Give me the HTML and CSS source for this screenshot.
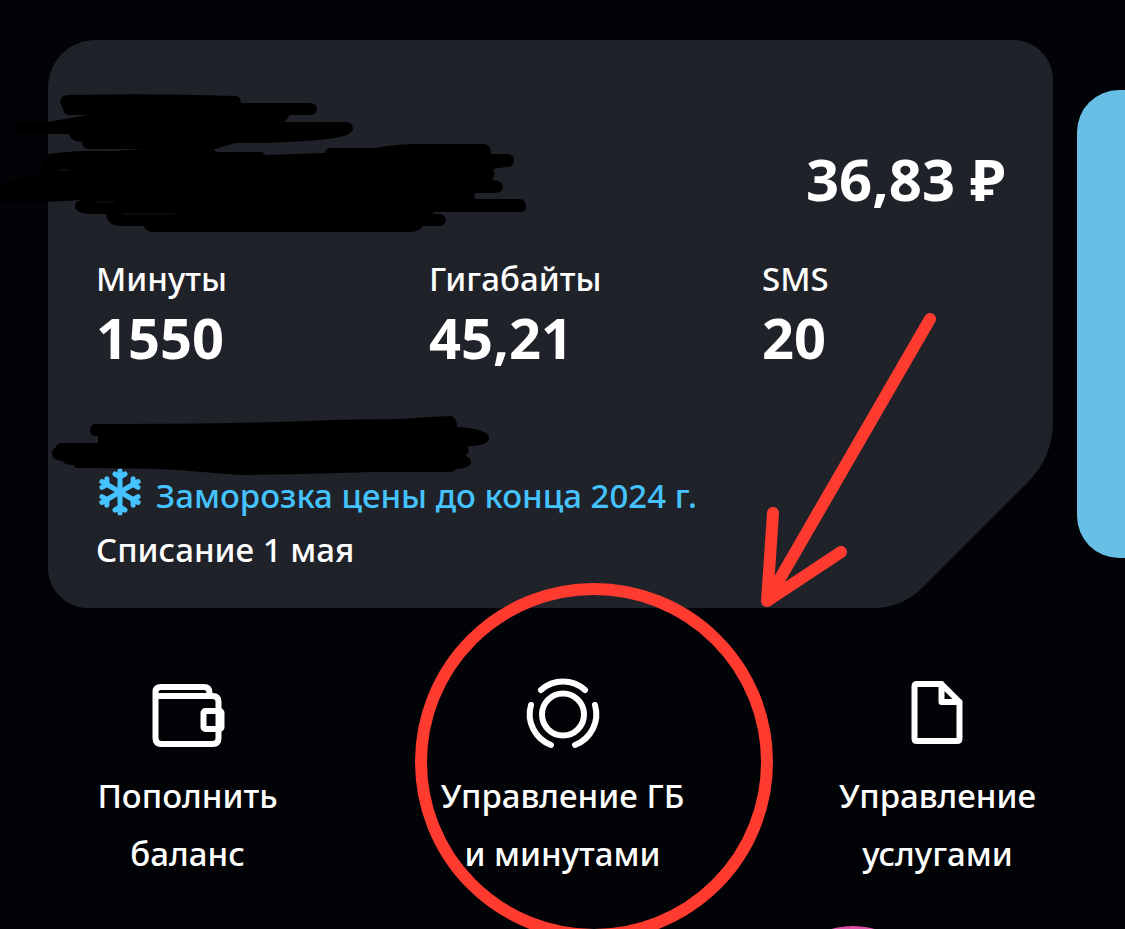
FILE: index.html
```html
<!DOCTYPE html>
<html lang="ru">
<head>
  <meta charset="UTF-8" />
  <meta name="viewport" content="width=device-width, initial-scale=1.0" />
  <title>Мой тариф</title>
  <link rel="stylesheet" href="styles.css">
</head>
<body>
  <main class="screen">
    <section class="carousel">
      <article class="card">
        <svg class="card-shape" viewBox="0 0 1005 568" preserveAspectRatio="none" aria-hidden="true">
          <path d="M48 0H965C987 0 1005 18 1005 40V381C1005 406 996 426 979 443L875 547C861 561 845 568 825 568H40C18 568 0 550 0 528V48C0 21 21 0 48 0Z" />
        </svg>
        <div class="balance">36,83 ₽</div>
        <dl class="stats">
          <div class="stat">
            <dt>Минуты</dt>
            <dd>1550</dd>
          </div>
          <div class="stat">
            <dt>Гигабайты</dt>
            <dd>45,21</dd>
          </div>
          <div class="stat">
            <dt>SMS</dt>
            <dd>20</dd>
          </div>
        </dl>
        <p class="freeze">
          <svg class="snow" viewBox="0 0 48 48" aria-hidden="true">
            <g id="arm">
              <path d="M24 24V3M19 6L24 9L29 6" />
            </g>
            <use href="#arm" transform="rotate(60 24 24)" />
            <use href="#arm" transform="rotate(120 24 24)" />
            <use href="#arm" transform="rotate(180 24 24)" />
            <use href="#arm" transform="rotate(240 24 24)" />
            <use href="#arm" transform="rotate(300 24 24)" />
          </svg>
          Заморозка цены до конца 2024 г.
        </p>
        <p class="charge">Списание 1 мая</p>
      </article>
      <div class="next-card"></div>
    </section>

    <nav class="actions">
      <button class="action" type="button">
        <svg class="icon" viewBox="0 0 72 72" aria-hidden="true">
          <path d="M3.5 16V61Q3.5 67 9.5 67H60.5Q66.5 67 66.5 61V25Q66.5 19 60.5 19H7Q3.5 19 3.5 15Q3.5 10 9 10H52Q57.5 10 57.5 16V19" />
          <rect x="51.5" y="34" width="18" height="18" rx="2" />
        </svg>
        <span>Пополнить<br>баланс</span>
      </button>
      <button class="action" type="button">
        <svg class="icon" viewBox="0 0 72 72" aria-hidden="true">
          <circle cx="36" cy="37.5" r="21" />
          <path d="M14 13A33 33 0 0 1 58 13M4 28A33 33 0 0 0 24 68M68 28A33 33 0 0 1 48 68" />
        </svg>
        <span>Управление ГБ<br>и минутами</span>
      </button>
      <button class="action" type="button">
        <svg class="icon" viewBox="0 0 72 72" aria-hidden="true">
          <path d="M39.5 7H15Q12.5 7 12.5 9.5V61.5Q12.5 64 15 64H55Q57.5 64 57.5 61.5V25ZM39.5 7V25H57.5" />
        </svg>
        <span>Управление<br>услугами</span>
      </button>
    </nav>

    <section class="stories">
      <div class="story"></div>
    </section>

    <!-- hand-drawn marks over the screen -->
    <svg class="marks" viewBox="0 0 1125 929" aria-hidden="true">
      <g class="scribble">
        <path d="M68 95Q150 93 236 96Q241 97 241 103H311Q317 104 317 109T311 115H289Q288 120 283 122H347Q353 123 353 129Q352 134 340 137Q310 143 235 143L215 149H88Q82 148 82 142Q71 142 69 134H22Q16 134 16 128T22 122H48L87 115H69Q63 114 63 108Q59 103 61 99T68 95Z" />
        <path d="M48 154Q80 150 110 151L160 148H213L216 152H262L266 155L325 153Q326 148 331 148H376Q395 144 420 144H485Q491 145 491 154H508Q514 155 514 160Q514 167 506 167L493 169Q496 174 492 180Q502 180 503 187Q502 193 494 193H475L474 199H520Q526 200 526 206T520 212H434L432 214H440Q446 215 446 220T440 226H423Q420 232 409 232H152Q145 231 144 226H122Q107 226 106 214H90Q75 213 75 206Q75 201 82 200L45 202L0 203V190Q4 178 42 176Q39 172 41 168Z" />
        <path d="M95 424Q200 424 280 422Q340 419 400 419Q430 417 451 416Q457 417 457 427Q489 429 489 438Q489 446 467 446Q471 452 465 456Q471 457 471 462Q471 468 456 469Q454 472 449 472H370Q320 474 240 475L190 471Q160 468 76 468L73 465Q64 465 63 461Q52 460 52 454Q52 449 56 447Q57 443 64 443H98V436H95Q90 435 90 430T95 424Z" />
      </g>
      <path class="gap" d="M60 170H68M95 202H114M123 214H175" />
      <g class="pen">
        <circle cx="594" cy="762" r="173" />
        <path d="M930 319L767 601M773 513L767 601L841 552" />
      </g>
    </svg>
  </main>
</body>
</html>
```
FILE: styles.css
```css
:root {
  --bg: #020306;
  --card-bg: #202229;
  --text-color: #ffffff;
  --ice: #45c3ff;
  --sky: #68bfe6;
  --red: #ff3b30;
}
* {
  box-sizing: border-box;
}
body {
  margin: 0;
  background: var(--bg);
  color: var(--text-color);
  font-family: "Noto Sans", "Open Sans", sans-serif;
  font-size: 33px;
  font-weight: 500;
  line-height: 48px;
}
.screen {
  position: relative;
  height: 100vh;
  overflow: hidden;
  padding-top: 40px;
}
.carousel {
  display: flex;
  gap: 24px;
  padding-left: 48px;
}
.card {
  position: relative;
  flex: 1;
  padding: 103px 48px 34px;
}
.card-shape {
  position: absolute;
  inset: 0;
  width: 100%;
  height: 100%;
  fill: var(--card-bg);
}
.card > :not(.card-shape) {
  position: relative;
}
.balance {
  font-size: 58px;
  font-weight: 700;
  line-height: 72px;
  text-align: right;
}
.stats {
  display: grid;
  grid-template-columns: repeat(3, 1fr);
  gap: 90px;
  margin: 40px 0 0;
}
.stat dd {
  margin: 0;
  font-size: 56px;
  font-weight: 700;
  line-height: 68px;
}
.freeze,
.charge {
  margin: 0;
}
.freeze {
  display: flex;
  align-items: center;
  gap: 12px;
  margin-top: 101px;
  color: var(--ice);
}
.charge {
  margin-top: 6px;
}
.snow {
  width: 48px;
  height: 48px;
  margin-top: -8px;
  fill: none;
  stroke: currentColor;
  stroke-width: 5;
  stroke-linecap: round;
  stroke-linejoin: round;
}
.next-card {
  width: 48px;
  margin: 50px 0;
  border-radius: 42px 0 0 42px;
  background: var(--sky);
}
.actions {
  display: grid;
  grid-template-columns: repeat(3, 1fr);
  margin-top: 69px;
}
.action {
  display: flex;
  flex-direction: column;
  align-items: center;
  gap: 18px;
  padding: 0;
  border: none;
  background: none;
  color: inherit;
  font: inherit;
  line-height: 58px;
  cursor: pointer;
}
.icon {
  width: 72px;
  height: 72px;
  overflow: visible;
  fill: none;
  stroke: currentColor;
  stroke-width: 6;
  stroke-linecap: round;
  stroke-linejoin: round;
}
.stories {
  display: flex;
  justify-content: flex-end;
  margin-top: 43px;
  padding-right: 192px;
}
.story {
  width: 160px;
  height: 160px;
  border-radius: 50%;
  background: #e04fa8;
}
.marks {
  position: absolute;
  top: 0;
  left: 0;
  width: 100%;
  pointer-events: none;
}
.scribble {
  fill: #000000;
}
.gap {
  stroke: #18191e;
  stroke-width: 1;
}
.pen {
  fill: none;
  stroke: var(--red);
  stroke-width: 12;
  stroke-linecap: round;
  stroke-linejoin: round;
}
```
